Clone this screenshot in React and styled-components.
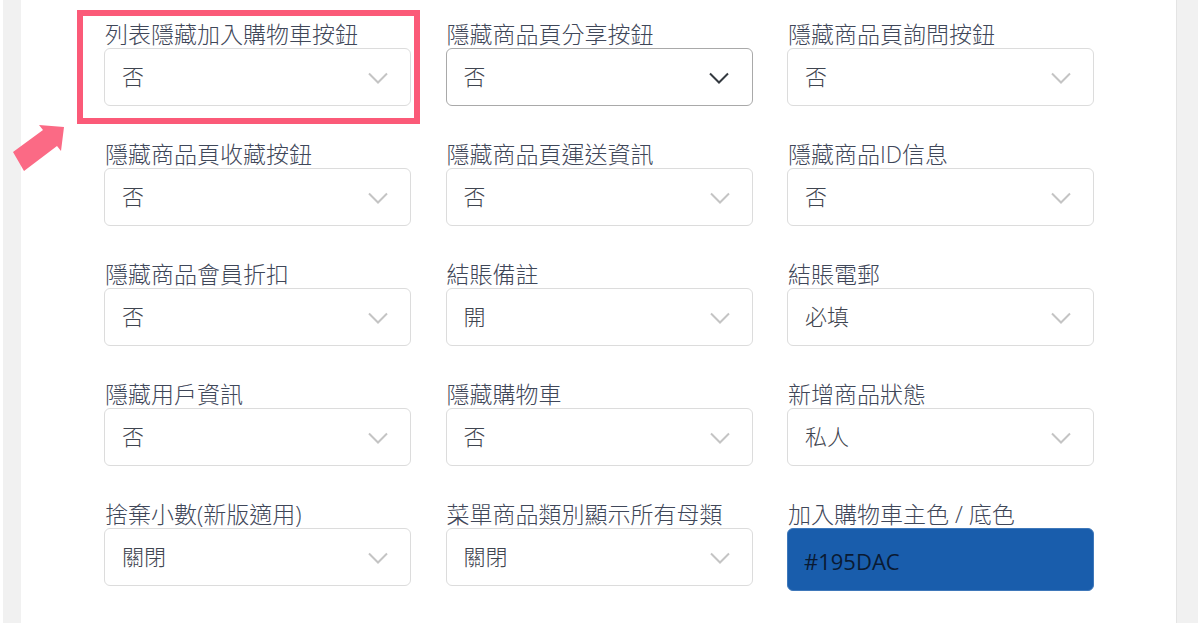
import React from "react";
import styled, { createGlobalStyle } from "styled-components";

const Global = createGlobalStyle`
  html, body { margin: 0; padding: 0; background: #fff; height: 623px; overflow: hidden; }
  * { box-sizing: border-box; }
`;

const Gutter = styled.div`
  width: 1198px;
  height: 623px;
  padding-left: 3px;
  background: #fff;
  display: flex;
  position: relative;
  overflow: hidden;
  font-family: "Open Sans", "Noto Sans CJK TC", sans-serif;
`;

const Page = styled.div`
  flex: 1;
  background: #f1f1f1;
  padding: 0 21px 0 18px;
  display: flex;
`;

const Card = styled.main`
  flex: 1;
  background: #fff;
  border-right: 1px solid #e4e4e4;
  padding: 20px 0 0 83px;
`;

const Grid = styled.div`
  display: grid;
  grid-template-columns: 307px 307px 307px;
  column-gap: 34.5px;
  row-gap: 34px;
`;

const Field = styled.div`
  display: flex;
  flex-direction: column;
  height: 86px;
`;

const Label = styled.label`
  font-size: 23px;
  line-height: 28px;
  height: 28px;
  padding-left: 1px;
  color: #3f4759;
  white-space: nowrap;
  font-weight: 300;
`;

const Select = styled.div`
  flex: none;
  height: 58px;
  border: 1px solid ${(p) => (p.$focused ? "#a9a9a9" : "#dcdcdc")};
  border-radius: 6px;
  background: #fff;
  display: flex;
  align-items: center;
  justify-content: space-between;
  padding: 0 ${(p) => (p.$focused ? "23px" : "22px")} 5px 17px;
  font-size: 22px;
  color: #3f4550;
  font-weight: 300;
`;

const Chevron = styled.svg`
  width: 20px;
  height: 12px;
  margin-top: 7px;
  fill: none;
  stroke: ${(p) => (p.$focused ? "#343a40" : "#c4c4c4")};
  stroke-width: 2;
`;

const ColorBox = styled.div`
  flex: none;
  height: 63px;
  background: #195dac;
  border-radius: 6px;
  border: 1px solid #3f78ba;
  display: flex;
  align-items: center;
  padding: 2px 15px 0 16px;
  font-size: 22px;
  color: #0a1a33;
`;

const Highlight = styled.div`
  position: absolute;
  left: 77px;
  top: 10px;
  width: 343px;
  height: 114px;
  border: 6px solid #fb5a78;
  pointer-events: none;
`;

const Arrow = styled.svg`
  position: absolute;
  left: 12px;
  top: 124px;
  width: 54px;
  height: 48px;
  fill: #fb6a85;
`;

const fields = [
  ["列表隱藏加入購物車按鈕", "否"],
  ["隱藏商品頁分享按鈕", "否", true],
  ["隱藏商品頁詢問按鈕", "否"],
  ["隱藏商品頁收藏按鈕", "否"],
  ["隱藏商品頁運送資訊", "否"],
  ["隱藏商品ID信息", "否"],
  ["隱藏商品會員折扣", "否"],
  ["結賬備註", "開"],
  ["結賬電郵", "必填"],
  ["隱藏用戶資訊", "否"],
  ["隱藏購物車", "否"],
  ["新增商品狀態", "私人"],
  ["捨棄小數(新版適用)", "關閉"],
  ["菜單商品類別顯示所有母類", "關閉"],
];

export default function App() {
  return (
    <>
      <Global />
      <Gutter>
        <Page>
          <Card>
            <Grid>
              {fields.map(([label, value, focused]) => (
                <Field key={label}>
                  <Label>{label}</Label>
                  <Select $focused={focused}>
                    <span>{value}</span>
                    <Chevron $focused={focused} viewBox="0 0 20 12">
                      <path d="M1 1.5 L10 10.5 L19 1.5" />
                    </Chevron>
                  </Select>
                </Field>
              ))}
              <Field>
                <Label>加入購物車主色 / 底色</Label>
                <ColorBox>#195DAC</ColorBox>
              </Field>
            </Grid>
          </Card>
        </Page>
        <Highlight />
        <Arrow viewBox="0 0 54 48">
          <path d="M1 28 L31 6 L27 1 L52 3 L49 27 L45 22 L12 47 Z" />
        </Arrow>
      </Gutter>
    </>
  );
}
